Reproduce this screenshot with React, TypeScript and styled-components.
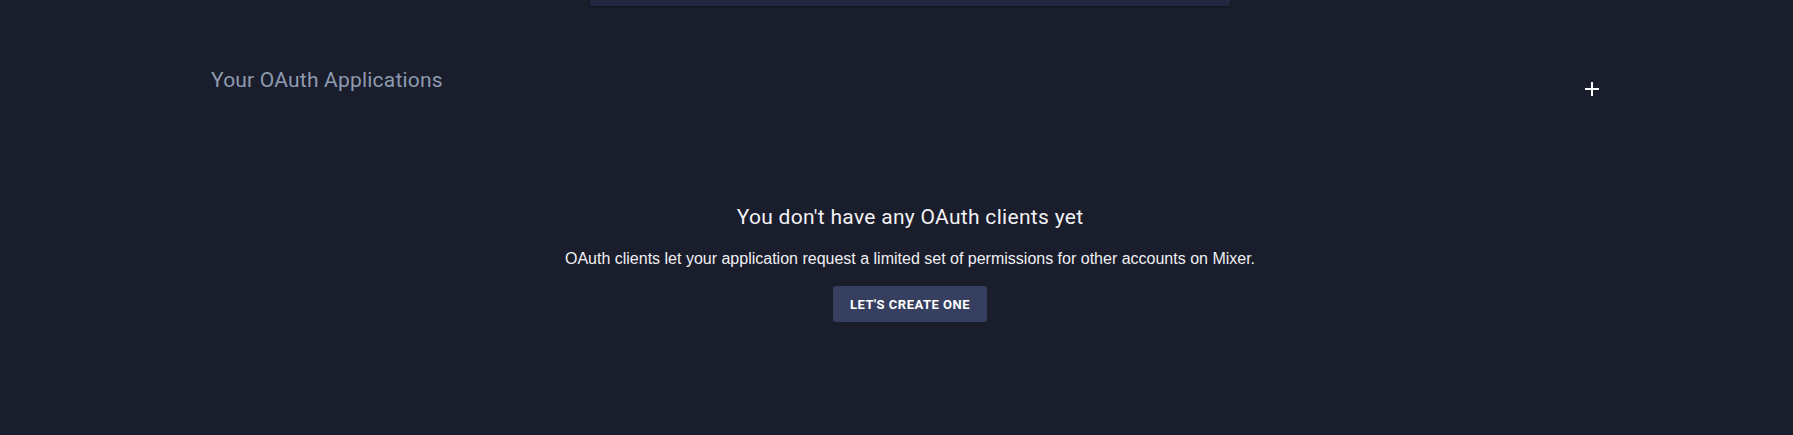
import React from "react";
import styled, { createGlobalStyle } from "styled-components";

const Global = createGlobalStyle`
  html, body { margin: 0; padding: 0; background: #1a1d2b; }
  body { font-family: "Liberation Sans", Arial, sans-serif; }
`;

const Page = styled.div`
  width: 1766px;
  height: 435px;
  padding-left: 27px;
  background: #1a1d2b;
  display: flex;
  flex-direction: column;
  overflow: hidden;
`;

const TopBar = styled.div`
  align-self: center;
  width: 640px;
  height: 6px;
  background: #222641;
  box-shadow: 0 1px 3px rgba(0, 0, 0, 0.35);
`;

const Header = styled.div`
  display: flex;
  justify-content: space-between;
  align-items: flex-start;
  padding: 60px 194px 0 184px;
`;

const Title = styled.h2`
  margin: 0;
  font-family: Roboto, "DejaVu Sans", sans-serif;
  font-weight: 400;
  font-size: 21px;
  line-height: 28px;
  color: #8d9ab0;
  letter-spacing: 0.2px;
`;

const AddButton = styled.button`
  margin-top: 16px;
  width: 14px;
  height: 14px;
  padding: 0;
  border: none;
  background: transparent;
  display: flex;
  cursor: pointer;
`;

const Empty = styled.div`
  display: flex;
  flex-direction: column;
  align-items: center;
  padding-top: 107px;
`;

const Heading = styled.h3`
  margin: 0;
  font-family: Roboto, "DejaVu Sans", sans-serif;
  font-weight: 400;
  font-size: 21px;
  line-height: 28px;
  color: #f2f2f5;
  letter-spacing: 0.3px;
`;

const Text = styled.p`
  margin: 18px 0 0;
  font-family: "Liberation Sans", Arial, sans-serif;
  font-size: 16px;
  line-height: 20px;
  color: #f0f0f3;
`;

const Cta = styled.button`
  margin-top: 17px;
  width: 154px;
  height: 36px;
  border: none;
  border-radius: 3px;
  background: #363f5f;
  color: #ffffff;
  font-family: Roboto, "DejaVu Sans", sans-serif;
  font-weight: 700;
  font-size: 13px;
  letter-spacing: 0.5px;
  text-transform: uppercase;
  cursor: pointer;
`;

export default function App() {
  return (
    <>
      <Global />
      <Page>
        <TopBar />
        <Header>
          <Title>Your OAuth Applications</Title>
          <AddButton aria-label="Add application">
            <svg width="14" height="14" viewBox="0 0 14 14">
              <rect x="6" y="0" width="2" height="14" fill="#ffffff" />
              <rect x="0" y="6" width="14" height="2" fill="#ffffff" />
            </svg>
          </AddButton>
        </Header>
        <Empty>
          <Heading>You don't have any OAuth clients yet</Heading>
          <Text>
            OAuth clients let your application request a limited set of permissions for other accounts on Mixer.
          </Text>
          <Cta>Let's create one</Cta>
        </Empty>
      </Page>
    </>
  );
}
